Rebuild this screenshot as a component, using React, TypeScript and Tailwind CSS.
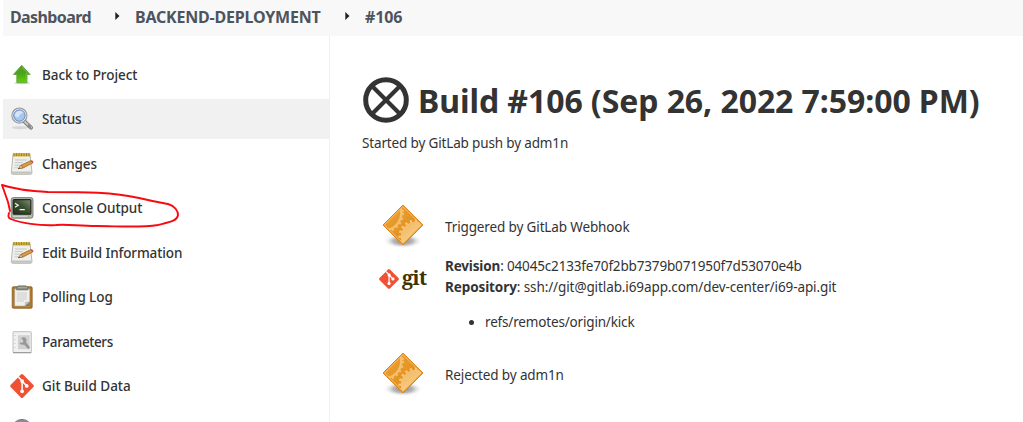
import type { ReactNode } from 'react';

function ArrowIcon() {
  return (
    <svg width="24" height="24" viewBox="0 0 24 24">
      <defs>
        <linearGradient id="arrow" x1="0" y1="0" x2="0" y2="1">
          <stop offset="0" stopColor="#5f9a35" />
          <stop offset="0.45" stopColor="#4aa31a" />
          <stop offset="1" stopColor="#62cf0c" />
        </linearGradient>
      </defs>
      <ellipse cx="12" cy="20" rx="8" ry="1.2" fill="#cfcfcf" />
      <path d="M11.7 2.3 20.2 11.5H17V19.6H6.8V11.5H3.4Z" fill="url(#arrow)" stroke="#5da032" strokeWidth="0.8" strokeLinejoin="round" />
      <path d="M12 4 18 10.8H16V18.5" fill="none" stroke="#8cc95b" strokeWidth="0.6" />
    </svg>
  );
}

function SearchIcon() {
  return (
    <svg width="24" height="24" viewBox="0 0 24 24">
      <ellipse cx="10" cy="20.6" rx="8" ry="1.7" fill="#d8d8d8" />
      <path d="M14.5 14.5 21 20.6" stroke="#777" strokeWidth="4" strokeLinecap="round" />
      <path d="M14.5 14.5 21 20.4" stroke="#c5c5c5" strokeWidth="2.2" strokeLinecap="round" />
      <path d="M18 17.8l2.8 2.6" stroke="#858585" strokeWidth="2" />
      <circle cx="9.4" cy="8.6" r="7.2" fill="#a9c6ea" stroke="#9a9a9a" strokeWidth="1.8" />
      <circle cx="9.4" cy="8.6" r="6.5" fill="none" stroke="#eeeeee" strokeWidth="1" />
      <circle cx="9.4" cy="8.6" r="5.6" fill="#a7c7ef" stroke="#6488bd" strokeWidth="0.9" />
      <path d="M4.8 8.6a4.8 4.8 0 0 1 8.8-2.6Q9.8 6 8.3 10.5 5.5 10.5 4.8 8.6Z" fill="#d5e5f8" />
    </svg>
  );
}

function NotepadIcon() {
  return (
    <svg width="24" height="24" viewBox="0 0 24 24">
      <path d="M3 2.5H20L22 20.5Q22 22.3 20.5 22.3H2.7Q1.2 22.3 1.3 20.5Z" fill="#efefec" stroke="#a6a6a1" strokeWidth="0.8" />
      <path d="M1.6 19.4H21.8L22 21.8H1.4Z" fill="#c3c3bd" />
      <path d="M3 1.2H20.2V4.5H3Z" fill="#d1ae32" />
      <path d="M4 1v3M6.5 1v3M9 1v3M11.5 1v3M14 1v3M16.5 1v3M19 1v3" stroke="#9c8122" strokeWidth="0.9" />
      <path d="M5 8H17M4.8 10.6H13M4.6 13.2H10M4.4 15.8H8" stroke="#c3c3c3" strokeWidth="0.9" />
      <path d="M8.5 16.6 11 13.2 21 8.6 23 10.8 13 16Z" fill="#dc9a43" stroke="#8e5b20" strokeWidth="0.7" />
      <path d="M8.5 16.6 11 13.2 12.7 15.8Z" fill="#edcf9b" stroke="#59452c" strokeWidth="0.4" />
      <path d="M20.6 8.8 22 8.2 23.5 10 22.4 11Z" fill="#d1433b" />
      <path d="M7.8 16.9 9.7 16.4 9 15.8Z" fill="#333" />
    </svg>
  );
}

function TerminalIcon() {
  return (
    <svg width="24" height="24" viewBox="0 0 24 24">
      <defs>
        <linearGradient id="screen" x1="0" y1="1" x2="1" y2="0">
          <stop offset="0" stopColor="#1f3018" />
          <stop offset="0.55" stopColor="#3b5230" />
          <stop offset="1" stopColor="#84917a" />
        </linearGradient>
      </defs>
      <rect x="1.2" y="1.6" width="21.8" height="20.6" rx="2.2" fill="#b1b1ae" stroke="#777773" strokeWidth="0.9" />
      <rect x="3.2" y="3.6" width="17.6" height="14.6" rx="1" fill="url(#screen)" stroke="#22281e" strokeWidth="1.2" />
      <path d="M5 7.3 8.2 9.3 5 11.3M9.6 13.7H14.8" fill="none" stroke="#f4f7f0" strokeWidth="1.2" />
      <path d="M3 20.4H21" stroke="#ddd" strokeWidth="0.8" />
      <rect x="17.5" y="19.7" width="2.5" height="1.1" fill="#80bb4b" />
    </svg>
  );
}

function ClipboardIcon() {
  return (
    <svg width="24" height="24" viewBox="0 0 24 24">
      <rect x="2.2" y="1.7" width="20" height="21.6" rx="1.2" fill="#b67820" stroke="#805316" strokeWidth="0.7" />
      <path d="M4.6 3.8H19.8V21.1H4.6Z" fill="#f0f0ee" stroke="#92928f" strokeWidth="0.5" />
      <path d="M8 0.8H16V2H18V5H6.5V2H8Z" fill="#84897e" stroke="#62665e" strokeWidth="0.5" />
      <path d="M7.5 2.7H17" stroke="#b8bcb4" strokeWidth="0.8" />
      <path d="M6.8 8H17M6.8 10H17M6.8 12H17M6.8 14H17M6.8 16H14" stroke="#cccccb" strokeWidth="1.1" />
      <path d="M19.8 16.8 15.2 21.1 15.4 17.3Z" fill="#c8c8c7" stroke="#989898" strokeWidth="0.4" />
      <path d="M19.8 16.8V21.1H15.2Z" fill="#747976" />
    </svg>
  );
}

function ParametersIcon() {
  return (
    <svg width="24" height="24" viewBox="0 0 24 24">
      <rect x="3" y="1.7" width="18.3" height="21" rx="0.8" fill="#f0f0f0" stroke="#b8b8b8" strokeWidth="0.9" />
      <path d="M3 22.7H21.3" stroke="#8d8d8d" strokeWidth="0.9" />
      <rect x="8" y="5.2" width="11.7" height="14" fill="#d1d1d1" />
      <path d="M5 5v1M5 9v1M5 13v1M5 17v1" stroke="#c4c4c4" />
      <path d="M11 8.2Q15.5 6 16.4 9.5 16.8 11.2 16 12.3L20 17.2 18.3 19.2 14.1 14.5Q10.6 15.5 9.2 12.8L12.4 12.8 13.4 11.4 12.6 9.4Z" fill="#989898" />
    </svg>
  );
}

function GitMark({ size }: { size: number }) {
  return (
    <svg width={size} height={size} viewBox="0 0 24 24" className="shrink-0">
      <path d="M10.9.6Q12 -.4 13.1.6L23.4 10.9Q24.4 12 23.4 13.1L13.1 23.4Q12 24.4 10.9 23.4L.6 13.1Q-.4 12 .6 10.9Z" fill="#f05033" />
      <path d="M8.4 3.1 12.1 6.8V17.4M12.1 7.2 17 12.1" fill="none" stroke="#fff" strokeWidth="1.5" />
      <circle cx="12.1" cy="7.1" r="1.9" fill="#fff" />
      <circle cx="12.1" cy="17.3" r="1.9" fill="#fff" />
      <circle cx="16.7" cy="11.9" r="1.9" fill="#fff" />
    </svg>
  );
}

function CauseIcon() {
  return (
    <svg width="48" height="48" viewBox="0 0 48 48" className="-mt-px ml-[17px] block">
      <defs>
        <radialGradient id="shade">
          <stop offset="0" stopColor="#888" />
          <stop offset="0.5" stopColor="#b9b9b9" />
          <stop offset="1" stopColor="#fff" stopOpacity="0" />
        </radialGradient>
        <linearGradient id="tile" x1="0" y1="0" x2="1" y2="1">
          <stop offset="0" stopColor="#eda53b" />
          <stop offset="1" stopColor="#dc850d" />
        </linearGradient>
        <linearGradient id="gear" x1="0" y1="0" x2="0.7" y2="1">
          <stop offset="0" stopColor="#f2b65c" />
          <stop offset="1" stopColor="#fbdca3" />
        </linearGradient>
        <clipPath id="inside"><path d="M24 5.5 42.5 24 24 42.5 5.5 24Z" /></clipPath>
      </defs>
      <ellipse cx="24" cy="40" rx="20" ry="7.5" fill="url(#shade)" />
      <path d="M24 4 44 24 24 44 4 24Z" fill="url(#tile)" stroke="#e2831a" strokeLinejoin="round" />
      <g clipPath="url(#inside)">
        <circle cx="5" cy="12" r="17.3" fill="none" stroke="#f4bf6f" strokeWidth="2.4" />
        <circle cx="5" cy="12" r="19" fill="none" stroke="#f4bf6f" strokeWidth="2" strokeDasharray="2.2 2.6" />
        <circle cx="37" cy="36" r="15.3" fill="url(#gear)" />
        <circle cx="37" cy="36" r="16.3" fill="none" stroke="#f6c47a" strokeWidth="2.6" strokeDasharray="2.4 2.6" />
      </g>
      <path d="M24 5.6 42.4 24 24 42.4 5.6 24Z" fill="none" stroke="#f7c67b" strokeWidth="0.8" />
      <path d="M24 4 44 24 24 44 4 24Z" fill="none" stroke="#e2831a" strokeWidth="0.9" />
    </svg>
  );
}

function AbortedIcon() {
  return (
    <svg width="48" height="48" viewBox="0 0 48 48" className="shrink-0">
      <circle cx="24" cy="24" r="20.3" fill="none" stroke="#333" strokeWidth="5" />
      <path d="M10 10 38 38M38 10 10 38" stroke="#333" strokeWidth="4.2" />
    </svg>
  );
}

function Caret() {
  return (
    <svg width="5" height="8" viewBox="0 0 5 8" className="mb-0.5 shrink-0">
      <path d="M0.3 0 4.5 4 0.3 8Z" fill="#222" />
    </svg>
  );
}

function Task({ icon, children, active = false, tracking }: { icon: ReactNode; children: ReactNode; active?: boolean; tracking: string }) {
  return (
    <li className={`flex h-10 items-center gap-2 pl-[7px] ${active ? 'bg-[#f1f1f1]' : ''}`}>
      <span className="size-6 shrink-0">{icon}</span>
      <span className={`text-[13.5px] leading-5 font-medium whitespace-nowrap text-[#333] ${tracking}`}>{children}</span>
    </li>
  );
}

export default function App() {
  return (
    <div className="relative flex h-[422px] w-[1023px] flex-col overflow-hidden bg-white pl-[3px] font-['Noto_Sans',sans-serif] text-[#333]">
      <nav className="flex h-9 shrink-0 items-center bg-[#f8f8f8] pb-[3px] pl-[7px] text-[16px] font-bold whitespace-nowrap text-[#4d545d]">
        <span className="w-[105px] tracking-[-0.6px]">Dashboard</span>
        <Caret />
        <span className="ml-[15px] w-[210px] tracking-[-0.2px]">BACKEND-DEPLOYMENT</span>
        <Caret />
        <span className="ml-[15px] tracking-[-0.1px]">#106</span>
      </nav>
      <div className="flex min-h-0 grow">
        <aside className="w-[327px] shrink-0 border-r border-[#f0f0f0] pt-[18.75px]">
          <ul className="flex flex-col gap-[4.5px]">
            <Task icon={<ArrowIcon />} tracking="tracking-[-0.06px]">Back to Project</Task>
            <Task icon={<SearchIcon />} tracking="tracking-[-0.2px]" active>Status</Task>
            <Task icon={<NotepadIcon />} tracking="tracking-[-0.15px]">Changes</Task>
            <Task icon={<TerminalIcon />} tracking="tracking-[-0.06px]">Console Output</Task>
            <Task icon={<NotepadIcon />} tracking="tracking-[-0.11px]">Edit Build Information</Task>
            <Task icon={<ClipboardIcon />} tracking="tracking-[-0.08px]">Polling Log</Task>
            <Task icon={<ParametersIcon />} tracking="tracking-[-0.4px]">Parameters</Task>
            <Task icon={<GitMark size={24} />} tracking="tracking-[-0.03px]">Git Build Data</Task>
            <Task icon={<svg width="24" height="24" viewBox="0 0 24 24"><circle cx="12" cy="10.4" r="10" fill="#8e8b9c" stroke="#777482" /></svg>} tracking="tracking-normal">{null}</Task>
          </ul>
        </aside>
        <main className="flex grow flex-col pt-10 pl-8 text-[13.5px] leading-[21px] whitespace-nowrap">
          <h1 className="flex h-12 items-center gap-2 text-[32px] font-bold">
            <AbortedIcon />
            <span className="tracking-[-0.07px]">Build #106 (Sep 26, 2022 7:59:00 PM)</span>
          </h1>
          <p className="mt-[9px] tracking-[-0.15px]">Started by GitLab push by adm1n</p>
          <section className="mt-[48px] grid grid-cols-[83px_1fr]">
            <div className="h-[54px]"><CauseIcon /></div>
            <p className="pt-[15px] tracking-[-0.13px]">Triggered by GitLab Webhook</p>
            <div className="flex h-[94px] items-start gap-[3px] pt-[13px] pl-[17px]">
              <GitMark size={20} />
              <span className="font-['Noto_Serif','DejaVu_Serif',serif] text-[20px] leading-[18px] font-bold tracking-[-0.6px] text-[#413000]">git</span>
            </div>
            <div>
              <p className="tracking-[-0.16px]"><b>Revision</b>: 04045c2133fe70f2bb7379b071950f7d53070e4b</p>
              <p className="tracking-[-0.1px]"><b>Repository</b>: ssh://git@gitlab.i69app.com/dev-center/i69-api.git</p>
              <ul className="mt-[14px] list-disc pl-10"><li className="tracking-[-0.17px]">refs/remotes/origin/kick</li></ul>
            </div>
            <div><CauseIcon /></div>
            <p className="pt-[15px] tracking-[-0.12px]">Rejected by adm1n</p>
          </section>
        </main>
      </div>
      <svg width="190" height="60" viewBox="0 180 190 60" className="pointer-events-none absolute top-[180px] left-0">
        <path d="M10 211 8 202 2 185C14 189 29 191 48 192 85 192 113 192 139 198 156 202 163 203 168 204 175 206 178 211 178 215 177 221 170 222 158 225 139 228 117 226 96 226 79 226 66 224 56 225 40 226 20 223 11 219 8 218 8 216 9 213" fill="none" stroke="#f90a10" strokeWidth="1.9" strokeLinejoin="round" strokeLinecap="round" />
      </svg>
    </div>
  );
}
